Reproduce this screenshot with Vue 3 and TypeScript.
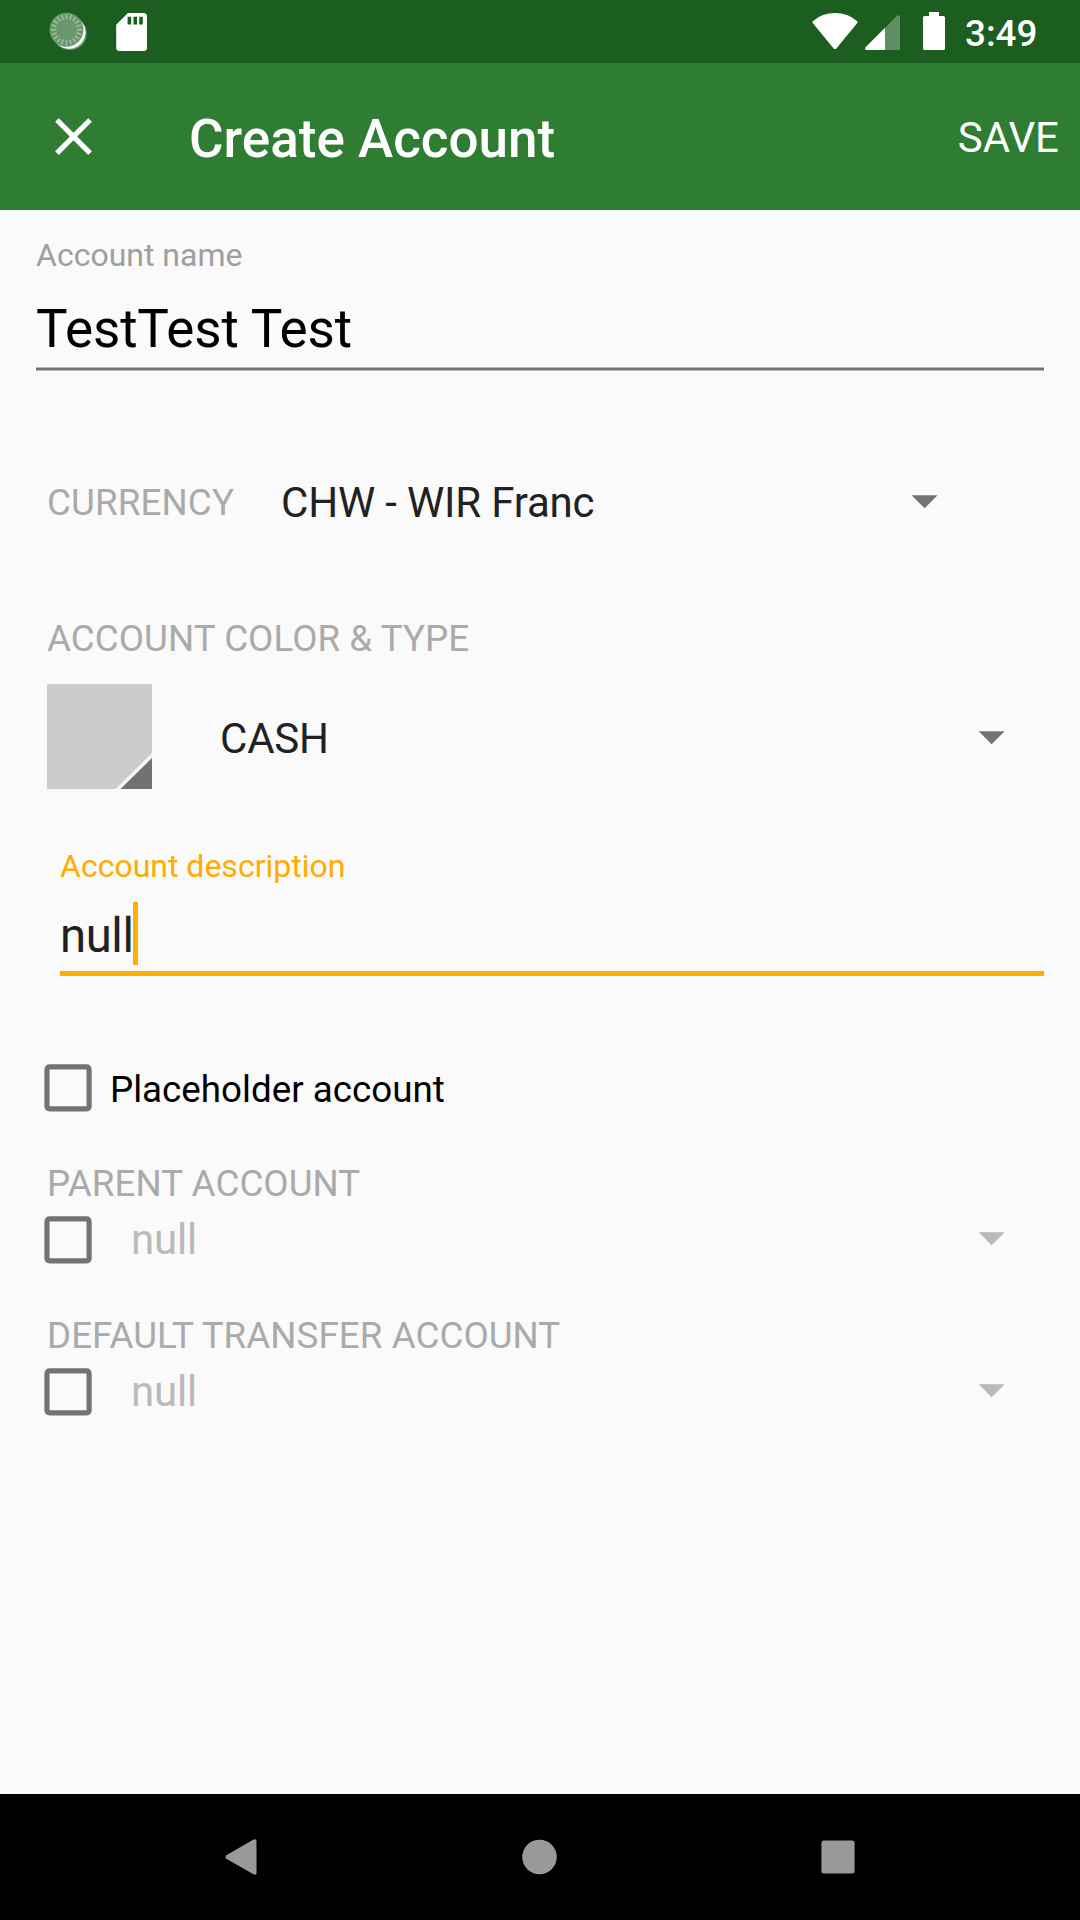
<script setup lang="ts">
import { ref } from 'vue'

interface LinkedAccount {
  label: string
  value: string
  checked: boolean
}

const accountName = ref('TestTest Test')
const currency = ref('CHW - WIR Franc')
const accountType = ref('CASH')
const description = ref('null')
const linked = ref<LinkedAccount[]>([
  { label: 'PARENT ACCOUNT', value: 'null', checked: false },
  { label: 'DEFAULT TRANSFER ACCOUNT', value: 'null', checked: false },
])
const ticks: number[] = Array.from({ length: 20 }, (_, i) => i * 18)
</script>

<template>
  <div class="screen">
    <header class="status">
      <div class="status-left">
        <svg class="sync" width="40" height="40" viewBox="0 0 40 40">
          <circle cx="22" cy="22.3" r="16.8" fill="#fff" fill-opacity=".35" />
          <circle cx="21" cy="21.3" r="16.5" fill="#fff" />
          <circle cx="18.5" cy="18.7" r="17" fill="#69966b" />
          <g stroke="#a2bfa3" stroke-width="1.5">
            <line v-for="t in ticks" :key="t" x1="18.5" y1="3" x2="18.5" y2="8.3" :transform="`rotate(${t} 18.5 18.7)`" />
          </g>
        </svg>
        <svg class="sd" width="31" height="38" viewBox="0 0 31 38">
          <path fill="#fff" fill-rule="evenodd" d="M12 0H27.5Q31 .2 31 3.5V34.500Q31 38 27.500 38H3.500Q.2 38 .2 34.500V11.700ZM11.600 3.700V11.500H15.200V3.700ZM17.500 3.700V11.500H21V3.700ZM23.200 3.700V11.500H26.800V3.700Z" />
        </svg>
      </div>
      <div class="status-right">
        <svg class="wifi" width="46" height="37" viewBox="0 0 46 37">
          <path fill="#fff" d="M.9 10.300Q-.1 9 1.100 7.900Q10 0 23 0T44.900 7.900Q46.100 9 45.100 10.300L24.300 35.400Q23 36.700 21.700 35.400Z" />
        </svg>
        <svg class="signal" width="35" height="35" viewBox="0 0 35 35">
          <path fill="#fff" fill-opacity=".3" d="M20 35V13L32 .8Q35-.8 35 2V33.500Q35 35 33.500 35Z" />
          <path fill="#fff" d="M20 12.700V35H1Q-.5 34.500.3 32.400Z" />
        </svg>
        <svg class="battery" width="22" height="38" viewBox="0 0 22 38">
          <path fill="#fff" d="M6 0H16V4H20.500Q22 4 22 5.500V36.500Q22 38 20.500 38H1.500Q0 38 0 36.500V5.500Q0 4 1.500 4H6Z" />
        </svg>
        <span class="clock">3:49</span>
      </div>
    </header>

    <div class="appbar">
      <svg class="close" width="63" height="63" viewBox="0 0 24 24">
        <path fill="#fff" d="M19 6.410 17.590 5 12 10.590 6.410 5 5 6.410 10.590 12 5 17.590 6.410 19 12 13.410 17.590 19 19 17.590 13.410 12Z" />
      </svg>
      <h1 class="title">Create Account</h1>
      <span class="save">SAVE</span>
    </div>

    <main class="form">
      <section class="name-field">
        <div class="hint">Account name</div>
        <div class="name-value">{{ accountName }}</div>
        <div class="name-line"></div>
      </section>

      <section class="currency-row">
        <span class="caption currency-caption">CURRENCY</span>
        <span class="currency">{{ currency }}</span>
        <svg class="arrow" width="27" height="14" viewBox="0 0 27 14"><path d="M.6 .3H26.600L13.600 13.300Z" /></svg>
      </section>

      <div class="caption type-caption">ACCOUNT COLOR &amp; TYPE</div>
      <section class="type-row">
        <svg class="swatch" width="105" height="105" viewBox="0 0 105 105">
          <path fill="#ccc" d="M0 0H105V105H0Z" />
          <path fill="#f5f5f5" d="M105 69V105H68.500Z" />
          <path fill="#727272" d="M105 74V105H73.500Z" />
        </svg>
        <span class="type">{{ accountType }}</span>
        <svg class="arrow" width="27" height="14" viewBox="0 0 27 14"><path d="M.6 .3H26.600L13.600 13.300Z" /></svg>
      </section>

      <section class="desc-field">
        <div class="hint">Account description</div>
        <div class="desc-value"><span class="desc-text">{{ description }}<i class="cursor"></i></span></div>
      </section>

      <section class="check-row placeholder-row">
        <svg class="box" width="48" height="48" viewBox="0 0 48 48"><rect x="3" y="2.800" width="42.100" height="42.100" rx="2.500" /></svg>
        <span class="placeholder">Placeholder account</span>
      </section>

      <section v-for="item in linked" :key="item.label" class="linked">
        <div class="caption">{{ item.label }}</div>
        <div class="check-row linked-row">
          <svg class="box" width="48" height="48" viewBox="0 0 48 48"><rect x="3" y="2.800" width="42.100" height="42.100" rx="2.500" /></svg>
          <span class="linked-value">{{ item.value }}</span>
          <svg class="arrow" width="27" height="14" viewBox="0 0 27 14"><path d="M.6 .3H26.600L13.600 13.300Z" /></svg>
        </div>
      </section>
    </main>

    <nav class="nav">
      <svg class="back" width="32" height="36" viewBox="0 0 32 36">
        <path fill="#999" d="M28.500.6Q31.500-.7 31.500 2.300V33.700Q31.500 36.700 28.500 35.300L1.300 19.800Q-.5 18 1.300 16.200Z" />
      </svg>
      <svg class="home" width="36" height="36" viewBox="0 0 36 36"><circle cx="18.500" cy="18" r="17.300" fill="#999" /></svg>
      <svg class="recent" width="34" height="34" viewBox="0 0 34 34"><rect x=".4" y=".4" width="33.200" height="33.200" rx="2.500" fill="#999" /></svg>
    </nav>
  </div>
</template>

<style>
body {
  margin: 0;
  background: #fafafa;
}
</style>

<style scoped>
.screen {
  display: flex;
  flex-direction: column;
  width: 1080px;
  height: 1920px;
  overflow: hidden;
  background: #fafafa;
  font-family: Roboto, sans-serif;
  font-size: 36.75px;
  color: #000;
  white-space: nowrap;
}
.screen * {
  box-sizing: border-box;
}
svg {
  display: block;
  flex: none;
}
.status {
  display: flex;
  justify-content: space-between;
  height: 63px;
  flex: none;
  background: #1b5e20;
}
.status-left,
.status-right {
  display: flex;
  align-items: flex-start;
}
.sync {
  margin: 11px 0 0 48px;
}
.sd {
  margin: 12.5px 0 0 28px;
}
.status-right {
  padding-right: 43px;
}
.wifi {
  margin-top: 13px;
}
.signal {
  margin: 15px 0 0 7px;
}
.battery {
  margin: 12px 0 0 23px;
}
.clock {
  width: 72px;
  margin-left: 19.8px;
  padding-top: 4px;
  line-height: 59px;
  font-weight: 500;
  color: #fff;
}
.appbar {
  display: flex;
  align-items: center;
  height: 147px;
  flex: none;
  padding: 0 21px 0 42px;
  background: #2e7d32;
  color: #fff;
}
.title {
  margin: 5px 0 0 84px;
  font-size: 53px;
  font-weight: 500;
  line-height: 70px;
}
.save {
  margin: 2px 0 0 auto;
  font-size: 42px;
  line-height: 60px;
}
.form {
  flex: 1;
  padding-top: 26px;
}
.hint {
  height: 39px;
  font-size: 32px;
  line-height: 38px;
  color: #9e9e9e;
}
.name-field {
  margin: 0 36px;
}
.name-value {
  height: 76px;
  margin-top: 16px;
  font-size: 53px;
  line-height: 76px;
  letter-spacing: -0.13px;
}
.name-line {
  height: 4px;
  background: #737373;
  border: solid #b9b9b9;
  border-width: 1px 0;
}
.caption {
  line-height: 37px;
  letter-spacing: 0.05px;
  color: #aaa;
}
.currency-row {
  display: flex;
  align-items: center;
  height: 65px;
  margin-top: 99px;
  padding: 0 142px 0 47px;
}
.currency-caption {
  width: 188px;
  letter-spacing: 0.12px;
}
.currency {
  margin-left: 46px;
  font-size: 42px;
  line-height: 65px;
  letter-spacing: -0.18px;
  color: #212121;
}
.arrow {
  margin-left: auto;
  fill: #737373;
}
.currency-row .arrow {
  margin-top: -1px;
}
.type-caption {
  margin: 85px 0 27px 47px;
}
.type-row {
  display: flex;
  align-items: center;
  height: 105px;
  padding: 0 75px 0 47px;
}
.type {
  margin: 4px 0 0 68px;
  font-size: 42px;
  line-height: 61px;
  letter-spacing: -0.2px;
  color: #212121;
}
.type-row .arrow {
  margin-top: 3px;
}
.desc-field {
  margin: 58px 36px 0 60px;
}
.desc-field .hint {
  color: #ffab00;
}
.desc-value {
  height: 75px;
  margin-top: 15px;
  border-bottom: 5px solid #ffab00;
  font-size: 47.25px;
  line-height: 70px;
  letter-spacing: -0.4px;
  color: #212121;
}
.desc-text {
  position: relative;
  display: inline-block;
}
.cursor {
  position: absolute;
  top: 1px;
  right: -4.5px;
  width: 5px;
  height: 63px;
  background: #ffab00;
}
.check-row {
  display: flex;
  align-items: center;
  height: 48px;
  padding: 0 75px 0 44px;
}
.placeholder-row {
  margin-top: 88px;
}
.box {
  fill: none;
  stroke: #737373;
  stroke-width: 5.2px;
}
.placeholder {
  margin: 3px 0 0 18px;
  line-height: 45px;
}
.linked {
  padding-top: 53px;
}
.linked .caption {
  margin-left: 47px;
}
.linked-row {
  margin-top: 14px;
}
.linked-value {
  margin: -1px 0 0 39px;
  font-size: 42px;
  line-height: 48px;
  letter-spacing: -0.2px;
  color: #b9b9b9;
}
.linked-row .arrow {
  margin-top: -2px;
  fill: #b9b9b9;
}
.nav {
  display: flex;
  align-items: center;
  height: 126px;
  flex: none;
  background: #000;
}
.back {
  margin-left: 225px;
}
.home {
  margin-left: 264px;
}
.recent {
  margin-left: 264px;
}
</style>
